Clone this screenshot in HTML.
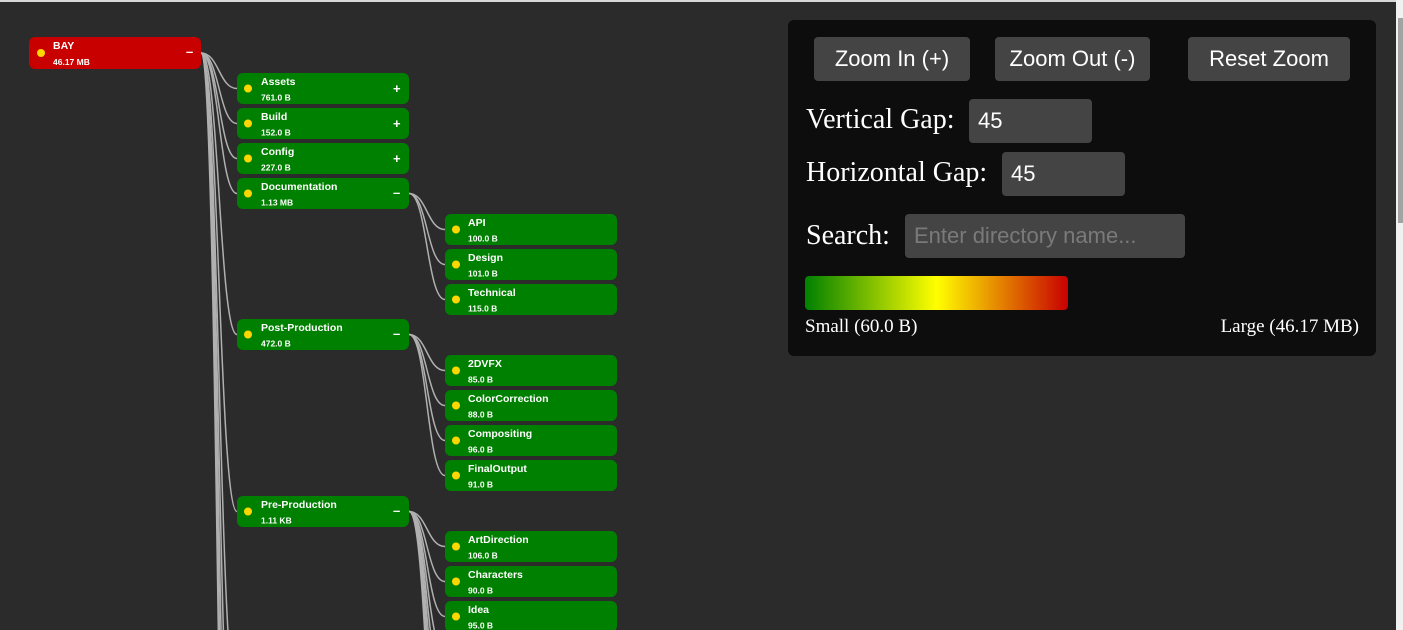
<!DOCTYPE html>
<html><head><meta charset="utf-8"><style>
html,body{margin:0;padding:0;width:1403px;height:630px;overflow:hidden;background:#2b2b2b;}
#top{position:absolute;left:0;top:0;width:1396px;height:2px;background:#d8d8d8;}
#sb{position:absolute;left:1396px;top:0;width:7px;height:630px;background:#f1f1f1;}
#thumb{position:absolute;left:1398px;top:18px;width:5px;height:205px;background:#a3a3a3;}
svg{position:absolute;left:0;top:0;overflow:hidden;}
.n text{font-family:"Liberation Sans",sans-serif;fill:#fff;font-weight:bold;}
.nm{font-size:10.5px;}
.sz{font-size:8.5px;}
.sg{font-size:13px;}
#panel{position:absolute;left:788px;top:20px;width:588px;height:336px;background:#0d0d0d;border-radius:6px;}
.btn{position:absolute;top:17px;height:44px;background:#444;border-radius:4px;color:#fff;font:22px "Liberation Sans",sans-serif;line-height:44px;text-align:center;}
.lbl{position:absolute;color:#fff;font:28px "Liberation Serif",serif;}
.inp{position:absolute;height:44px;background:#444;border-radius:4px;color:#fff;font:22px "Liberation Sans",sans-serif;line-height:44px;padding-left:9px;box-sizing:border-box;}
.sm{position:absolute;color:#fff;font:19px "Liberation Serif",serif;}
</style></head><body>
<div id="top"></div>
<svg width="1396" height="630">
<g fill="none" stroke="#b0b0b0" stroke-width="1.5">
<path d="M201,53 C219,53 219,88.5 237,88.5"/>
<path d="M201,53 C219,53 219,123.5 237,123.5"/>
<path d="M201,53 C219,53 219,158.5 237,158.5"/>
<path d="M201,53 C219,53 219,193.5 237,193.5"/>
<path d="M201,53 C219,53 219,334.5 237,334.5"/>
<path d="M201,53 C219,53 219,511.5 237,511.5"/>
<path d="M201,53 C219,53 219,700 237,700"/>
<path d="M201,53 C219,53 219,850 237,850"/>
<path d="M201,53 C219,53 219,1000 237,1000"/>
<path d="M201,53 C219,53 219,1150 237,1150"/>
<path d="M201,53 C219,53 219,1300 237,1300"/>
<path d="M409,193.5 C427,193.5 427,229.5 445,229.5"/>
<path d="M409,193.5 C427,193.5 427,264.5 445,264.5"/>
<path d="M409,193.5 C427,193.5 427,299.5 445,299.5"/>
<path d="M409,334.5 C427,334.5 427,370.5 445,370.5"/>
<path d="M409,334.5 C427,334.5 427,405.5 445,405.5"/>
<path d="M409,334.5 C427,334.5 427,440.5 445,440.5"/>
<path d="M409,334.5 C427,334.5 427,475.5 445,475.5"/>
<path d="M409,511.5 C427,511.5 427,546.5 445,546.5"/>
<path d="M409,511.5 C427,511.5 427,581.5 445,581.5"/>
<path d="M409,511.5 C427,511.5 427,616.5 445,616.5"/>
<path d="M409,511.5 C427,511.5 427,652 445,652"/>
<path d="M409,511.5 C427,511.5 427,687 445,687"/>
<path d="M409,511.5 C427,511.5 427,722 445,722"/>
<path d="M409,511.5 C427,511.5 427,757 445,757"/>
<path d="M409,511.5 C427,511.5 427,792 445,792"/>
<path d="M409,511.5 C427,511.5 427,830 445,830"/>
</g>
<g class="n" transform="translate(29,37)"><rect width="172" height="32" rx="6" fill="#c80000"/><circle cx="12" cy="16" r="4" fill="#ffd700"/><text class="nm" x="24" y="12">BAY</text><text class="sz" x="24" y="28">46.17 MB</text><text class="sg" x="157" y="19">–</text></g>
<g class="n" transform="translate(237,73)"><rect width="172" height="31" rx="6" fill="#008000"/><circle cx="11" cy="15.5" r="4" fill="#ffd700"/><text class="nm" x="24" y="12">Assets</text><text class="sz" x="24" y="27.5">761.0 B</text><text class="sg" x="156" y="20">+</text></g>
<g class="n" transform="translate(237,108)"><rect width="172" height="31" rx="6" fill="#008000"/><circle cx="11" cy="15.5" r="4" fill="#ffd700"/><text class="nm" x="24" y="12">Build</text><text class="sz" x="24" y="27.5">152.0 B</text><text class="sg" x="156" y="20">+</text></g>
<g class="n" transform="translate(237,143)"><rect width="172" height="31" rx="6" fill="#008000"/><circle cx="11" cy="15.5" r="4" fill="#ffd700"/><text class="nm" x="24" y="12">Config</text><text class="sz" x="24" y="27.5">227.0 B</text><text class="sg" x="156" y="20">+</text></g>
<g class="n" transform="translate(237,178)"><rect width="172" height="31" rx="6" fill="#008000"/><circle cx="11" cy="15.5" r="4" fill="#ffd700"/><text class="nm" x="24" y="12">Documentation</text><text class="sz" x="24" y="27.5">1.13 MB</text><text class="sg" x="156" y="19">–</text></g>
<g class="n" transform="translate(445,214)"><rect width="172" height="31" rx="6" fill="#008000"/><circle cx="11" cy="15.5" r="4" fill="#ffd700"/><text class="nm" x="23" y="12">API</text><text class="sz" x="23" y="27.5">100.0 B</text></g>
<g class="n" transform="translate(445,249)"><rect width="172" height="31" rx="6" fill="#008000"/><circle cx="11" cy="15.5" r="4" fill="#ffd700"/><text class="nm" x="23" y="12">Design</text><text class="sz" x="23" y="27.5">101.0 B</text></g>
<g class="n" transform="translate(445,284)"><rect width="172" height="31" rx="6" fill="#008000"/><circle cx="11" cy="15.5" r="4" fill="#ffd700"/><text class="nm" x="23" y="12">Technical</text><text class="sz" x="23" y="27.5">115.0 B</text></g>
<g class="n" transform="translate(237,319)"><rect width="172" height="31" rx="6" fill="#008000"/><circle cx="11" cy="15.5" r="4" fill="#ffd700"/><text class="nm" x="24" y="12">Post-Production</text><text class="sz" x="24" y="27.5">472.0 B</text><text class="sg" x="156" y="19">–</text></g>
<g class="n" transform="translate(445,355)"><rect width="172" height="31" rx="6" fill="#008000"/><circle cx="11" cy="15.5" r="4" fill="#ffd700"/><text class="nm" x="23" y="12">2DVFX</text><text class="sz" x="23" y="27.5">85.0 B</text></g>
<g class="n" transform="translate(445,390)"><rect width="172" height="31" rx="6" fill="#008000"/><circle cx="11" cy="15.5" r="4" fill="#ffd700"/><text class="nm" x="23" y="12">ColorCorrection</text><text class="sz" x="23" y="27.5">88.0 B</text></g>
<g class="n" transform="translate(445,425)"><rect width="172" height="31" rx="6" fill="#008000"/><circle cx="11" cy="15.5" r="4" fill="#ffd700"/><text class="nm" x="23" y="12">Compositing</text><text class="sz" x="23" y="27.5">96.0 B</text></g>
<g class="n" transform="translate(445,460)"><rect width="172" height="31" rx="6" fill="#008000"/><circle cx="11" cy="15.5" r="4" fill="#ffd700"/><text class="nm" x="23" y="12">FinalOutput</text><text class="sz" x="23" y="27.5">91.0 B</text></g>
<g class="n" transform="translate(237,496)"><rect width="172" height="31" rx="6" fill="#008000"/><circle cx="11" cy="15.5" r="4" fill="#ffd700"/><text class="nm" x="24" y="12">Pre-Production</text><text class="sz" x="24" y="27.5">1.11 KB</text><text class="sg" x="156" y="19">–</text></g>
<g class="n" transform="translate(445,531)"><rect width="172" height="31" rx="6" fill="#008000"/><circle cx="11" cy="15.5" r="4" fill="#ffd700"/><text class="nm" x="23" y="12">ArtDirection</text><text class="sz" x="23" y="27.5">106.0 B</text></g>
<g class="n" transform="translate(445,566)"><rect width="172" height="31" rx="6" fill="#008000"/><circle cx="11" cy="15.5" r="4" fill="#ffd700"/><text class="nm" x="23" y="12">Characters</text><text class="sz" x="23" y="27.5">90.0 B</text></g>
<g class="n" transform="translate(445,601)"><rect width="172" height="31" rx="6" fill="#008000"/><circle cx="11" cy="15.5" r="4" fill="#ffd700"/><text class="nm" x="23" y="12">Idea</text><text class="sz" x="23" y="27.5">95.0 B</text></g>
</svg>
<div id="panel">
<div class="btn" style="left:26px;width:156px;">Zoom In (+)</div>
<div class="btn" style="left:207px;width:155px;">Zoom Out (-)</div>
<div class="btn" style="left:400px;width:162px;">Reset Zoom</div>
<div class="lbl" style="left:18px;top:84px;">Vertical Gap:</div>
<div class="inp" style="left:181px;top:79px;width:123px;">45</div>
<div class="lbl" style="left:18px;top:137px;">Horizontal Gap:</div>
<div class="inp" style="left:214px;top:132px;width:123px;">45</div>
<div class="lbl" style="left:18px;top:200px;">Search:</div>
<div class="inp" style="left:117px;top:194px;width:280px;color:#7a7a7a;">Enter directory name...</div>
<div style="position:absolute;left:17px;top:256px;width:263px;height:34px;border-radius:4px;background:linear-gradient(to right,#008000,#ffff00 50%,#c80000);"></div>
<div class="sm" style="left:17px;top:296px;">Small (60.0 B)</div>
<div class="sm" style="right:17px;top:296px;">Large (46.17 MB)</div>
</div>
<div id="sb"></div><div id="thumb"></div>
</body></html>
